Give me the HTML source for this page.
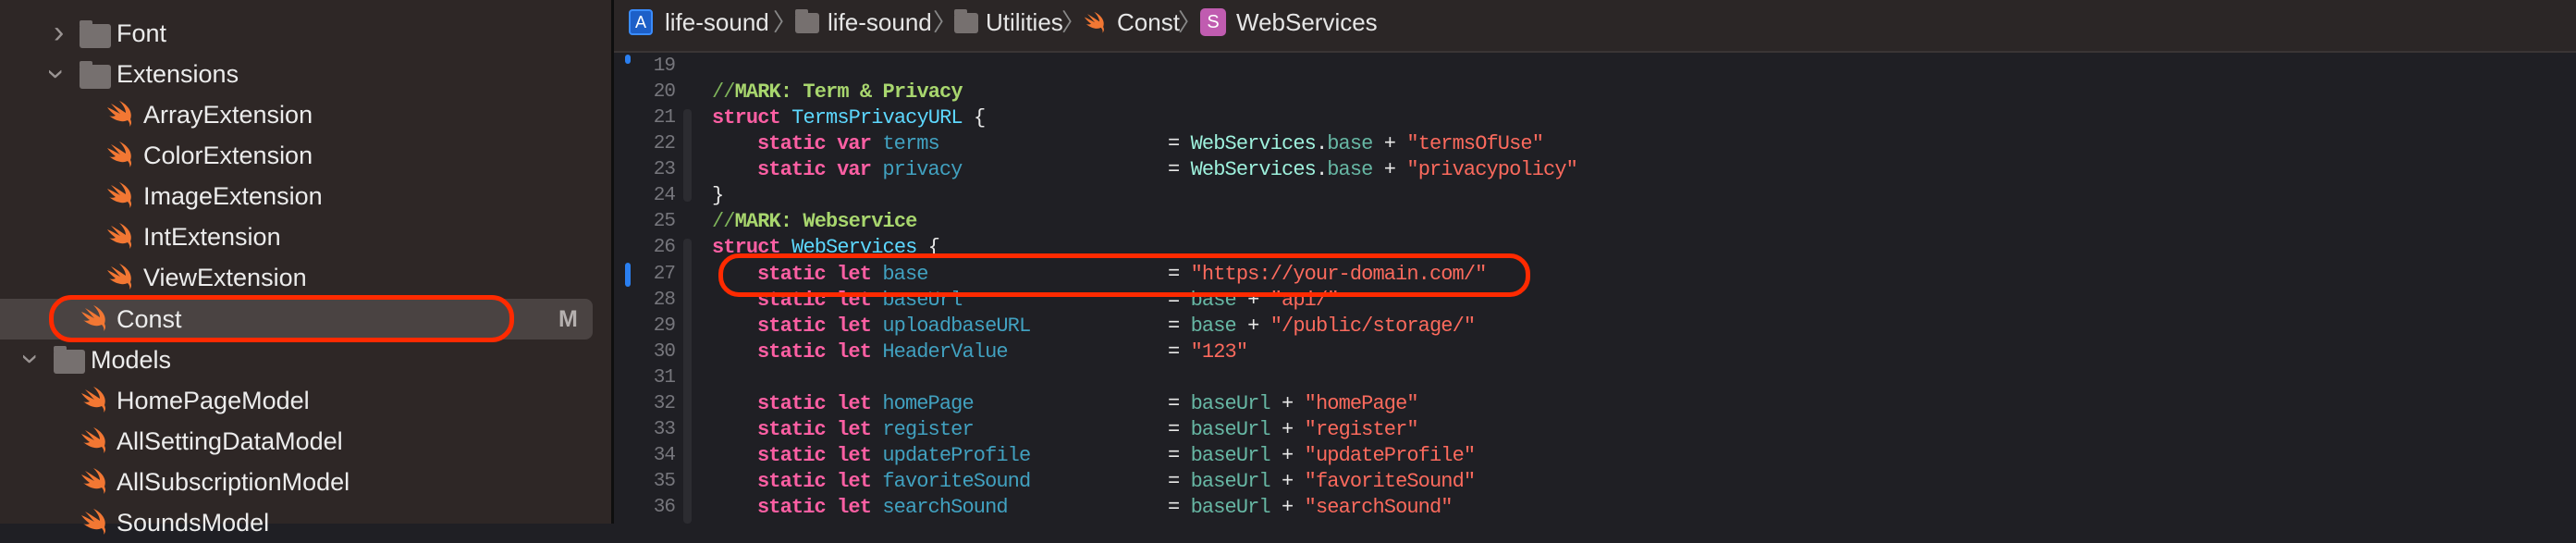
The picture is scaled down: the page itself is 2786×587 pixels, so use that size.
<!DOCTYPE html>
<html><head><meta charset="utf-8"><style>
*{margin:0;padding:0;box-sizing:border-box}
body{width:2786px;height:566px;overflow:hidden;background:#1f1f24;position:relative;font-family:"Liberation Sans",sans-serif}
#side{position:absolute;left:0;top:0;width:661px;height:566px;background:#2e2726}
#div{position:absolute;left:661px;top:0;width:3px;height:566px;background:#0e0e0e}
.row{position:absolute;height:44px;line-height:44px;color:#ececec;font-size:27px;white-space:nowrap}
.sw{position:absolute;width:32px;height:30px}
.fold{position:absolute;width:34px;height:26px;background:#76706f;border-radius:3px}
.fold:before{content:"";position:absolute;left:0;top:-4px;width:14px;height:6px;background:#76706f;border-radius:2px 2px 0 0}
.chev{position:absolute;color:#9a9493;font-size:34px;line-height:34px}
#sel{position:absolute;left:0;top:323px;width:641px;height:44px;background:#4a4342;border-radius:0 8px 8px 0}
#ring{position:absolute;left:53px;top:319px;width:503px;height:51px;border:5px solid #ff2a00;border-radius:24px}
#bar{position:absolute;left:664px;top:0;width:2122px;height:57px;background:#2b2626;border-bottom:2px solid #3a3535}
.bc{position:absolute;top:0;line-height:48px;color:#e6e6e6;font-size:26px;white-space:nowrap}
.ln{position:absolute;left:664px;width:66px;text-align:right;color:#76767c;font-family:"Liberation Mono",monospace;font-size:21px;letter-spacing:-1px}
.code{position:absolute;font-family:"Liberation Mono",monospace;font-size:22px;letter-spacing:-0.9px;white-space:pre;color:#e8e8e8}
.k{color:#fc5fa3;font-weight:bold}.id{color:#41a1c0}.t{color:#5dd8ff}.s{color:#fc6a5d}.w{color:#9ef1dd}.b{color:#67b7a4}.m{color:#a8d66e;font-weight:bold}.mc{color:#7fb45a}
</style></head><body>
<div id="side">
<div id="sel"></div>
<svg width="0" height="0" style="position:absolute"><defs><symbol id="swift" viewBox="0 0 32 30"><path d="M3 16c6 5 14 8 20 5 2 2 3 5 2 7 3-3 2-6 1-8C29 12 23 4 14 0c4 4 7 9 7 13C15 9 9 5 5 3c4 4 7 8 10 11C11 12 6 9 1 7c2 3 5 6 9 9-3 1-5 1-7 0z" fill="#f27733"/></symbol></defs></svg>
<div class="chev" style="left:58px;top:18px">›</div><div class="fold" style="left:86px;top:26px"></div><div class="row" style="left:126px;top:14px">Font</div>
<div class="chev" style="left:56px;top:63px;transform:rotate(90deg)">›</div><div class="fold" style="left:86px;top:70px"></div><div class="row" style="left:126px;top:58px">Extensions</div>
<svg class="sw" style="left:115px;top:109px"><use href="#swift"/></svg><div class="row" style="left:155px;top:102px">ArrayExtension</div>
<svg class="sw" style="left:115px;top:153px"><use href="#swift"/></svg><div class="row" style="left:155px;top:146px">ColorExtension</div>
<svg class="sw" style="left:115px;top:197px"><use href="#swift"/></svg><div class="row" style="left:155px;top:190px">ImageExtension</div>
<svg class="sw" style="left:115px;top:241px"><use href="#swift"/></svg><div class="row" style="left:155px;top:234px">IntExtension</div>
<svg class="sw" style="left:115px;top:285px"><use href="#swift"/></svg><div class="row" style="left:155px;top:278px">ViewExtension</div>
<svg class="sw" style="left:87px;top:330px"><use href="#swift"/></svg><div class="row" style="left:126px;top:323px">Const</div>
<div class="row" style="left:604px;top:323px;color:#b5b0af;font-weight:bold;font-size:25px">M</div>
<div id="ring"></div>
<div class="chev" style="left:28px;top:371px;transform:rotate(90deg)">›</div><div class="fold" style="left:58px;top:378px"></div><div class="row" style="left:98px;top:367px">Models</div>
<svg class="sw" style="left:87px;top:418px"><use href="#swift"/></svg><div class="row" style="left:126px;top:411px">HomePageModel</div>
<svg class="sw" style="left:87px;top:462px"><use href="#swift"/></svg><div class="row" style="left:126px;top:455px">AllSettingDataModel</div>
<svg class="sw" style="left:87px;top:506px"><use href="#swift"/></svg><div class="row" style="left:126px;top:499px">AllSubscriptionModel</div>
<svg class="sw" style="left:87px;top:550px"><use href="#swift"/></svg><div class="row" style="left:126px;top:543px">SoundsModel</div>
</div>
<div id="div"></div>
<div id="bar">
<div style="position:absolute;left:16px;top:10px;width:26px;height:28px;border:2px solid #3a8cff;background:#1d5fc8;border-radius:4px;color:#fff;font-size:18px;text-align:center;line-height:24px">A</div>
<div class="bc" style="left:55px">life-sound</div><div class="bc" style="left:172px;color:#888">〉</div>
<div class="fold" style="left:196px;top:14px;width:26px;height:22px"></div><div class="bc" style="left:231px">life-sound</div><div class="bc" style="left:345px;color:#888">〉</div>
<div class="fold" style="left:368px;top:14px;width:26px;height:22px"></div><div class="bc" style="left:402px">Utilities</div><div class="bc" style="left:484px;color:#888">〉</div>
<svg class="sw" style="left:508px;top:12px;width:26px;height:26px" viewBox="0 0 32 30"><use href="#swift"/></svg><div class="bc" style="left:544px">Const</div><div class="bc" style="left:610px;color:#888">〉</div>
<div style="position:absolute;left:634px;top:9px;width:28px;height:30px;background:#c05cb0;border-radius:5px;color:#fff;font-size:20px;text-align:center;line-height:30px">S</div>
<div class="bc" style="left:673px">WebServices</div>
</div>
<div style="position:absolute;left:676px;top:59px;width:6px;height:10px;background:#2a7ff0;border-radius:3px"></div>
<div style="position:absolute;left:676px;top:284px;width:6px;height:26px;background:#2a7ff0;border-radius:3px"></div>
<div style="position:absolute;left:739px;top:118px;width:9px;height:100px;background:#2c2c31;border-radius:4px"></div>
<div style="position:absolute;left:739px;top:258px;width:9px;height:308px;background:#2c2c31;border-radius:4px"></div>
<div class="ln" style="top:60px">19</div><div class="ln" style="top:88px">20</div><div class="ln" style="top:116px">21</div><div class="ln" style="top:144px">22</div><div class="ln" style="top:172px">23</div><div class="ln" style="top:200px">24</div><div class="ln" style="top:228px">25</div><div class="ln" style="top:256px">26</div><div class="ln" style="top:285px">27</div><div class="ln" style="top:313px">28</div><div class="ln" style="top:341px">29</div><div class="ln" style="top:369px">30</div><div class="ln" style="top:397px">31</div><div class="ln" style="top:425px">32</div><div class="ln" style="top:453px">33</div><div class="ln" style="top:481px">34</div><div class="ln" style="top:509px">35</div><div class="ln" style="top:537px">36</div>
<div class="code" style="left:770px;top:87px"><span class="mc">//</span><span class="m">MARK: Term &amp; Privacy</span></div>
<div class="code" style="left:770px;top:115px"><span class="k">struct</span> <span class="t">TermsPrivacyURL</span> {</div>
<div class="code" style="left:819px;top:143px"><span class="k">static var</span> <span class="id">terms</span></div>
<div class="code" style="left:819px;top:171px"><span class="k">static var</span> <span class="id">privacy</span></div>
<div class="code" style="left:1263px;top:143px">= <span class="w">WebServices</span>.<span class="b">base</span> + <span class="s">"termsOfUse"</span></div>
<div class="code" style="left:1263px;top:171px">= <span class="w">WebServices</span>.<span class="b">base</span> + <span class="s">"privacypolicy"</span></div>
<div class="code" style="left:770px;top:199px">}</div>
<div class="code" style="left:770px;top:227px"><span class="mc">//</span><span class="m">MARK: Webservice</span></div>
<div class="code" style="left:770px;top:255px"><span class="k">struct</span> <span class="t">WebServices</span> {</div>
<div class="code" style="left:819px;top:284px"><span class="k">static let</span> <span class="id">base</span></div><div class="code" style="left:1263px;top:284px">= <span class="s">"https://your-domain.com/"</span></div>
<div class="code" style="left:819px;top:312px"><span class="k">static let</span> <span class="id">baseUrl</span></div><div class="code" style="left:1263px;top:312px">= <span class="b">base</span> + <span class="s">"api/"</span></div>
<div class="code" style="left:819px;top:340px"><span class="k">static let</span> <span class="id">uploadbaseURL</span></div><div class="code" style="left:1263px;top:340px">= <span class="b">base</span> + <span class="s">"/public/storage/"</span></div>
<div class="code" style="left:819px;top:368px"><span class="k">static let</span> <span class="id">HeaderValue</span></div><div class="code" style="left:1263px;top:368px">= <span class="s">"123"</span></div>
<div class="code" style="left:819px;top:424px"><span class="k">static let</span> <span class="id">homePage</span></div><div class="code" style="left:1263px;top:424px">= <span class="b">baseUrl</span> + <span class="s">"homePage"</span></div>
<div class="code" style="left:819px;top:452px"><span class="k">static let</span> <span class="id">register</span></div><div class="code" style="left:1263px;top:452px">= <span class="b">baseUrl</span> + <span class="s">"register"</span></div>
<div class="code" style="left:819px;top:480px"><span class="k">static let</span> <span class="id">updateProfile</span></div><div class="code" style="left:1263px;top:480px">= <span class="b">baseUrl</span> + <span class="s">"updateProfile"</span></div>
<div class="code" style="left:819px;top:508px"><span class="k">static let</span> <span class="id">favoriteSound</span></div><div class="code" style="left:1263px;top:508px">= <span class="b">baseUrl</span> + <span class="s">"favoriteSound"</span></div>
<div class="code" style="left:819px;top:536px"><span class="k">static let</span> <span class="id">searchSound</span></div><div class="code" style="left:1263px;top:536px">= <span class="b">baseUrl</span> + <span class="s">"searchSound"</span></div>
<div style="position:absolute;left:777px;top:274px;width:878px;height:47px;border:5px solid #ff2a00;border-radius:22px"></div>
</body></html>
